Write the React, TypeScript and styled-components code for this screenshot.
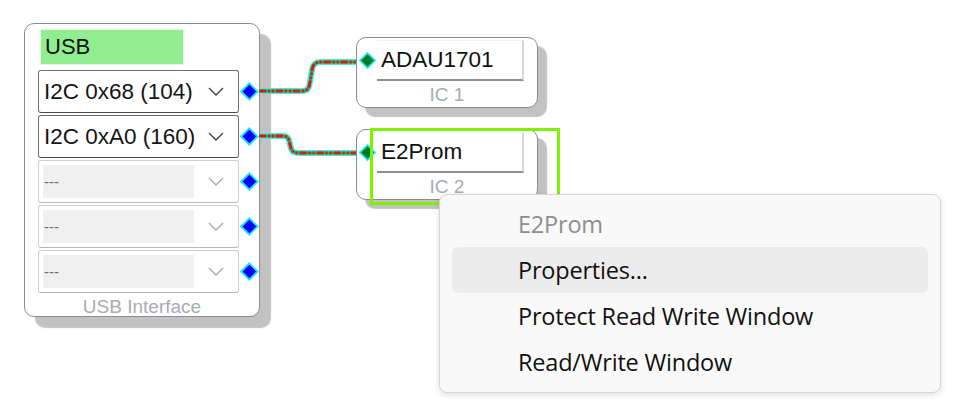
import React from "react";
import styled, { createGlobalStyle } from "styled-components";

// diagram canvas: blocks sit at their place on the canvas, the menu floats on top

const Global = createGlobalStyle`
  html, body { margin: 0; padding: 0; background: #ffffff; }
  body { font-family: "Liberation Sans", Arial, sans-serif; }
`;

const Canvas = styled.div`
  position: relative;
  width: 970px;
  height: 407px;
  overflow: hidden;
  background: #ffffff;
`;

const Block = styled.div<{ $x: number; $y: number; $w: number; $h: number; $shadow: number }>`
  position: absolute;
  left: ${(p) => p.$x}px;
  top: ${(p) => p.$y}px;
  width: ${(p) => p.$w}px;
  height: ${(p) => p.$h}px;
  box-sizing: border-box;
  border: 1px solid #8c8c8c;
  border-radius: 10px;
  background: #ffffff;
  box-shadow: ${(p) => p.$shadow}px ${(p) => p.$shadow}px 1px #c2c2c2;
  display: flex;
  flex-direction: column;
`;

const UsbBody = styled.div`
  display: flex;
  flex-direction: column;
  gap: 2px;
  padding: 5px 0 0 13px;
`;

const Title = styled.div`
  width: 144px;
  height: 36px;
  margin-left: 2px;
  margin-bottom: 3px;
  background: #90ee90;
  box-sizing: border-box;
  border: 1px solid #e6f7e6;
  font-size: 22px;
  line-height: 34px;
  padding-left: 4px;
  color: #111;
`;

const PortRow = styled.div`
  display: flex;
  align-items: center;
  gap: 1px;
`;

const Combo = styled.div<{ $enabled: boolean }>`
  width: 204px;
  height: 43px;
  box-sizing: border-box;
  border: 1px solid ${(p) => (p.$enabled ? "#6e6e6e" : "#cfcfcf")};
  border-bottom-color: ${(p) => (p.$enabled ? "#4a4a4a" : "#b8b8b8")};
  border-radius: 3px;
  background: #ffffff;
  display: flex;
  align-items: center;
  padding: 4px 14px 4px 4px;
`;

const ComboText = styled.div<{ $enabled: boolean }>`
  flex: 1;
  align-self: stretch;
  display: flex;
  align-items: center;
  background: ${(p) => (p.$enabled ? "transparent" : "#f0f0f0")};
  margin-right: ${(p) => (p.$enabled ? "0" : "14px")};
  font-size: ${(p) => (p.$enabled ? "22.5px" : "15px")};
  color: ${(p) => (p.$enabled ? "#151515" : "#7a6a60")};
  padding-left: 1px;
`;

const Footer = styled.div`
  flex: 1;
  display: flex;
  align-items: center;
  justify-content: center;
  font-size: 19px;
  color: #a9acb3;
  padding-top: 3px;
`;

const IcTop = styled.div`
  display: flex;
  align-items: center;
  padding: 2px 0 0 2px;
  gap: 1px;
`;

const NameBox = styled.div`
  width: 147px;
  height: 41px;
  box-sizing: border-box;
  background: #ffffff;
  border-top: 1px solid #f2f2f2;
  border-right: 2px solid #d9d9d9;
  border-bottom: 2px solid #8f8f8f;
  font-size: 22.5px;
  line-height: 38px;
  padding-left: 4px;
  color: #111;
`;

const IcLabel = styled.div`
  flex: 1;
  display: flex;
  align-items: center;
  justify-content: center;
  font-size: 19px;
  color: #a9acb3;
  padding-top: 2px;
`;

const Selection = styled.div`
  position: absolute;
  left: 370px;
  top: 128px;
  width: 190px;
  height: 77px;
  box-sizing: border-box;
  border: 3px solid #7ef200;
  pointer-events: none;
`;

const Wires = styled.svg`
  position: absolute;
  left: 0;
  top: 0;
  pointer-events: none;
`;

const Menu = styled.div`
  position: absolute;
  left: 439px;
  top: 194px;
  width: 502px;
  height: 199px;
  box-sizing: border-box;
  background: #f9f9f9;
  border: 1px solid #d6d6d6;
  border-radius: 8px;
  box-shadow: 0 2px 6px rgba(0, 0, 0, 0.12);
  padding: 6px 12px;
  display: flex;
  flex-direction: column;
  font-family: "Open Sans", "Noto Sans", sans-serif;
`;

const MenuItem = styled.div<{ $hover?: boolean; $header?: boolean }>`
  height: 46px;
  border-radius: 6px;
  display: flex;
  align-items: center;
  padding-left: 66px;
  font-size: 23.5px;
  font-weight: 500;
  letter-spacing: -0.2px;
  color: ${(p) => (p.$header ? "#8e8e8e" : "#111111")};
  background: ${(p) => (p.$hover ? "#ececec" : "transparent")};
`;

const Chevron = ({ enabled }: { enabled: boolean }) => (
  <svg width="16" height="9" viewBox="0 0 16 9">
    <polyline
      points="1,1 8,8 15,1"
      fill="none"
      stroke={enabled ? "#3c3c3c" : "#a8a8a8"}
      strokeWidth="1.3"
    />
  </svg>
);

const Pin = ({ color, size }: { color: string; size: number }) => (
  <svg width={size} height={size} viewBox="0 0 16 16">
    <polygon points="8,1 15,8 8,15 1,8" fill={color} stroke="#19e6f0" strokeWidth="1.6" />
  </svg>
);

const ports = [
  { label: "I2C 0x68 (104)", enabled: true },
  { label: "I2C 0xA0 (160)", enabled: true },
  { label: "---", enabled: false },
  { label: "---", enabled: false },
  { label: "---", enabled: false },
];

const Wire = ({ d }: { d: string }) => (
  <g fill="none" strokeLinecap="butt">
    <path d={d} stroke="#3ff0d8" strokeWidth="6" />
    <path d={d} stroke="#3aa060" strokeWidth="3" />
    <path d={d} stroke="#e01a10" strokeWidth="3" strokeDasharray="7 2 2 2 2 2" />
  </g>
);

const IcBlock = ({ x, y, name, label }: { x: number; y: number; name: string; label: string }) => (
  <Block $x={x} $y={y} $w={182} $h={71} $shadow={9}>
    <IcTop>
      <Pin color="#007a1e" size={17} />
      <NameBox>{name}</NameBox>
    </IcTop>
    <IcLabel>{label}</IcLabel>
  </Block>
);

export default function App() {
  return (
    <Canvas>
      <Global />
      <Block $x={24} $y={23} $w={236} $h={294} $shadow={11}>
        <UsbBody>
          <Title>USB</Title>
          {ports.map((p, i) => (
            <PortRow key={i}>
              <Combo $enabled={p.enabled}>
                <ComboText $enabled={p.enabled}>{p.label}</ComboText>
                <Chevron enabled={p.enabled} />
              </Combo>
              <Pin color="#0000ff" size={19} />
            </PortRow>
          ))}
        </UsbBody>
        <Footer>USB Interface</Footer>
      </Block>

      <Wires width="970" height="407">
        <Wire d="M259 91 H302 C308 91 309 88 310 82 L312 70 C313 64 315 62 322 62 H360" />
        <Wire d="M259 136 H283 C288 136 289 139 290 144 C291 151 293 153 299 153 H360" />
      </Wires>

      <IcBlock x={356} y={37} name="ADAU1701" label="IC 1" />
      <IcBlock x={356} y={129} name="E2Prom" label="IC 2" />
      <Selection />

      <Menu>
        <MenuItem $header>E2Prom</MenuItem>
        <MenuItem $hover>Properties...</MenuItem>
        <MenuItem>Protect Read Write Window</MenuItem>
        <MenuItem>Read/Write Window</MenuItem>
      </Menu>
    </Canvas>
  );
}
